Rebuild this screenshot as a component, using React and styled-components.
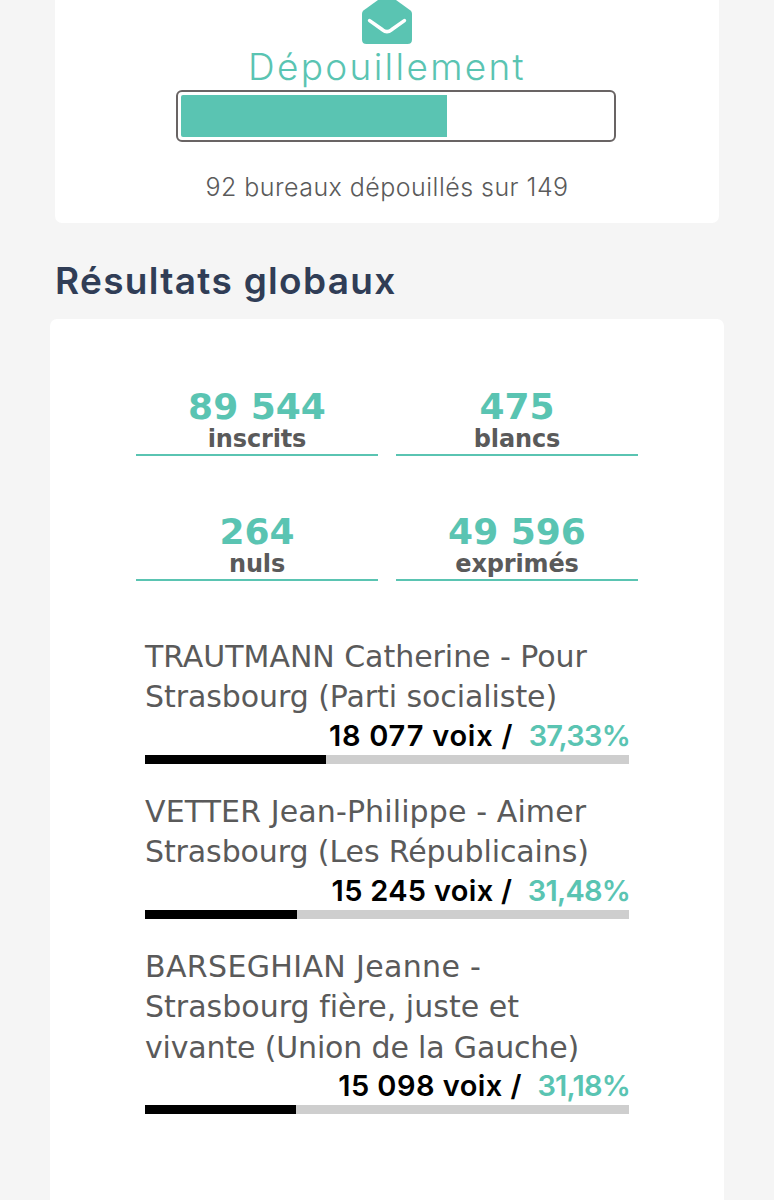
import React from 'react';
import styled, { createGlobalStyle } from 'styled-components';

const GlobalStyle = createGlobalStyle`
  * {
    box-sizing: border-box;
  }

  body {
    margin: 0;
    background: #f5f5f5;
    color: #5a5a5a;
    font-family: 'DejaVu Sans', sans-serif;
    font-variant-ligatures: none;
  }
`;

const Page = styled.main`
  height: 1200px;
  overflow: hidden;
`;

const CountingCard = styled.section`
  display: flex;
  flex-direction: column;
  align-items: center;
  width: 664px;
  height: 223px;
  margin-left: 55px;
  background: #fff;
  border-radius: 0 0 7px 7px;
`;

const EnvelopeIcon = styled.svg`
  flex: none;
  width: 50px;
  height: 50px;
  margin-top: -6px;
`;

const CountingTitle = styled.h2`
  height: 46px;
  margin: 0;
  color: #5ac4b2;
  font: 300 37px/45px Inter, sans-serif;
  letter-spacing: 2.3px;
  white-space: nowrap;
`;

const CountingTrack = styled.div`
  width: 440px;
  height: 52px;
  margin-left: 18px;
  padding: 3px;
  border: 2px solid #696464;
  border-radius: 6px;
`;

const CountingFill = styled.div`
  width: ${({ $value }) => $value}%;
  height: 42px;
  background: #5ac4b2;
  border-radius: 2px 0 0 2px;
`;

const CountingText = styled.p`
  margin: 29px 0 0;
  font: 300 25px/32px Inter, sans-serif;
  letter-spacing: 0.47px;
  white-space: nowrap;
`;

const SectionTitle = styled.h1`
  height: 46px;
  margin: 35px 0 15px 55px;
  color: #303d56;
  font: 600 37px/46px Inter, sans-serif;
  letter-spacing: 1.3px;
  white-space: nowrap;
`;

const ResultsCard = styled.section`
  width: 674px;
  height: 900px;
  margin-left: 50px;
  padding: 66px 86px 0;
  background: #fff;
  border-radius: 7px;
`;

const Stats = styled.div`
  display: grid;
  grid-template-columns: 242px 242px;
  gap: 54px 18px;
`;

const Stat = styled.div`
  height: 71px;
  border-bottom: 2px solid #5ac4b2;
  text-align: center;
`;

const StatValue = styled.div`
  color: #5ac4b2;
  font-size: 36px;
  font-weight: 700;
  line-height: 43px;
`;

const StatLabel = styled.div`
  font-size: 24px;
  font-weight: 700;
  line-height: 22px;
  letter-spacing: -0.15px;
`;

const Candidates = styled.div`
  display: flex;
  flex-direction: column;
  gap: 28px;
  margin: 56px 9px 0;
`;

const NameLine = styled.div`
  font-size: 30px;
  line-height: 40.3px;
  letter-spacing: ${({ $tracking }) => $tracking}px;
  white-space: nowrap;
`;

const Score = styled.div`
  display: flex;
  justify-content: flex-end;
  gap: 15.5px;
  height: 37.4px;
  margin-right: -1px;
  color: #000;
  font: 600 29px/35.4px Inter, sans-serif;
  white-space: nowrap;
`;

const Votes = styled.span`
  letter-spacing: ${({ $tracking }) => $tracking}px;
`;

const Percent = styled.span`
  color: #5ac4b2;
  letter-spacing: -0.8px;
`;

const VoteTrack = styled.div`
  height: 9px;
  background: #cecece;
`;

const VoteFill = styled.div`
  width: ${({ $value }) => $value}%;
  height: 100%;
  background: #000;
`;

const stats = [
  { value: '89 544', label: 'inscrits' },
  { value: '475', label: 'blancs' },
  { value: '264', label: 'nuls' },
  { value: '49 596', label: 'exprimés' },
];

const candidates = [
  {
    name: [
      { text: 'TRAUTMANN Catherine - Pour', tracking: -0.04 },
      { text: 'Strasbourg (Parti socialiste)', tracking: -0.07 },
    ],
    votes: '18 077',
    votesTracking: 0.75,
    percent: 37.33,
  },
  {
    name: [
      { text: 'VETTER Jean-Philippe - Aimer', tracking: 0.12 },
      { text: 'Strasbourg (Les Républicains)', tracking: -0.1 },
    ],
    votes: '15 245',
    votesTracking: 0.3,
    percent: 31.48,
  },
  {
    name: [
      { text: 'BARSEGHIAN Jeanne -', tracking: 0.35 },
      { text: 'Strasbourg fière, juste et', tracking: 0.02 },
      { text: 'vivante (Union de la Gauche)', tracking: -0.16 },
    ],
    votes: '15 098',
    votesTracking: 0.45,
    percent: 31.18,
  },
];

const Envelope = () => (
  <EnvelopeIcon viewBox="0 0 50 50">
    <path
      d="M0 19.5Q0 17.5 1.8 16.2L18.5 4.2Q25 0 31.5 4.2L48.2 16.2Q50 17.5 50 19.5V45.5Q50 50 45.5 50H4.5Q0 50 0 45.5Z"
      fill="#5ac4b2"
    />
    <path
      d="M7.6 26.6L20.5 35.8Q25 39.4 29.5 35.8L42.4 26.6"
      fill="none"
      stroke="#fff"
      strokeWidth="3.6"
      strokeLinecap="round"
    />
  </EnvelopeIcon>
);

const Candidate = ({ name, votes, votesTracking, percent }) => (
  <div>
    {name.map(({ text, tracking }) => (
      <NameLine key={text} $tracking={tracking}>{text}</NameLine>
    ))}
    <Score>
      <Votes $tracking={votesTracking}>{votes} voix /</Votes>
      <Percent>{percent.toFixed(2).replace('.', ',')}%</Percent>
    </Score>
    <VoteTrack>
      <VoteFill $value={percent} />
    </VoteTrack>
  </div>
);

export default function App() {
  return (
    <Page>
      <GlobalStyle />
      <CountingCard>
        <Envelope />
        <CountingTitle>Dépouillement</CountingTitle>
        <CountingTrack>
          <CountingFill $value={(92 / 149) * 100} />
        </CountingTrack>
        <CountingText>92 bureaux dépouillés sur 149</CountingText>
      </CountingCard>
      <SectionTitle>Résultats globaux</SectionTitle>
      <ResultsCard>
        <Stats>
          {stats.map(({ value, label }) => (
            <Stat key={label}>
              <StatValue>{value}</StatValue>
              <StatLabel>{label}</StatLabel>
            </Stat>
          ))}
        </Stats>
        <Candidates>
          {candidates.map((candidate) => (
            <Candidate key={candidate.votes} {...candidate} />
          ))}
        </Candidates>
      </ResultsCard>
    </Page>
  );
}
